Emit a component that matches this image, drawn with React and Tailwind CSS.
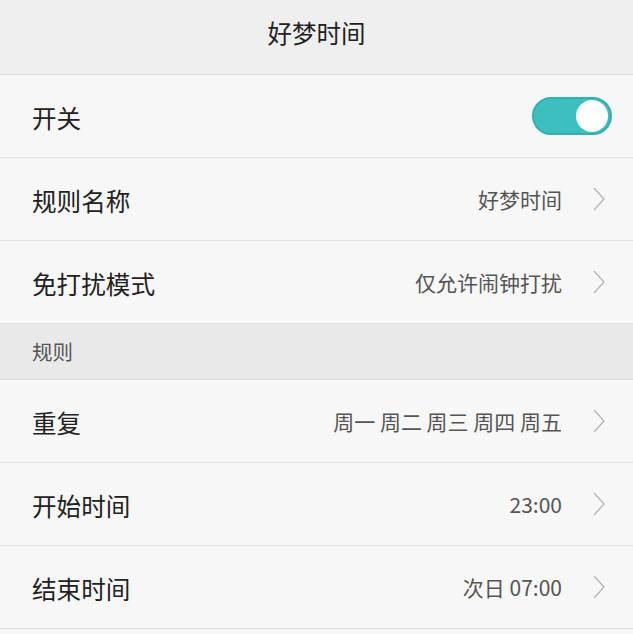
import React from "react";

const Chevron = () => (
  <svg width="14" height="26" viewBox="0 0 14 26" className="ml-[30px] shrink-0">
    <path d="M2 2 L12 13 L2 24" fill="none" stroke="#b5b5b5" strokeWidth="1.3" />
  </svg>
);

const Row = ({ label, value, children }) => (
  <div className="h-[83px] flex items-center pl-[32px] pr-[27px] bg-[#f7f7f7] border-b border-[#e2e2e2]">
    <div className="text-[24.6px] text-[#222] mt-[2px]">{label}</div>
    <div className="flex-1" />
    {value !== undefined && (
      <>
        <div className="text-[21px] text-[#555] mt-[2px]">{value}</div>
        <Chevron />
      </>
    )}
    {children}
  </div>
);

export default function App() {
  return (
    <div
      className="w-[633px] h-[634px] bg-[#f7f7f7] overflow-hidden"
      style={{ fontFamily: '"Noto Sans CJK SC", "Noto Sans", sans-serif' }}
    >
      <div className="h-[75px] flex items-center justify-center bg-[#efefef] border-b border-[#dcdcdc]">
        <div className="text-[24.5px] text-[#222] -mt-[8px]">好梦时间</div>
      </div>
      <Row label="开关">
        <div className="w-[80px] h-[38px] rounded-full bg-[#3ebfbf] border-2 border-[#36afaf] flex items-center justify-end pr-[2px] mr-[-6px]">
          <div className="w-[32px] h-[32px] rounded-full bg-white" />
        </div>
      </Row>
      <Row label="规则名称" value="好梦时间" />
      <Row label="免打扰模式" value="仅允许闹钟打扰" />
      <div className="h-[56px] flex items-center pl-[32px] bg-[#e9e9e9] border-b border-[#dcdcdc]">
        <div className="text-[20.5px] text-[#555]">规则</div>
      </div>
      <Row label="重复" value="周一 周二 周三 周四 周五" />
      <Row label="开始时间" value="23:00" />
      <Row label="结束时间" value="次日 07:00" />
    </div>
  );
}
